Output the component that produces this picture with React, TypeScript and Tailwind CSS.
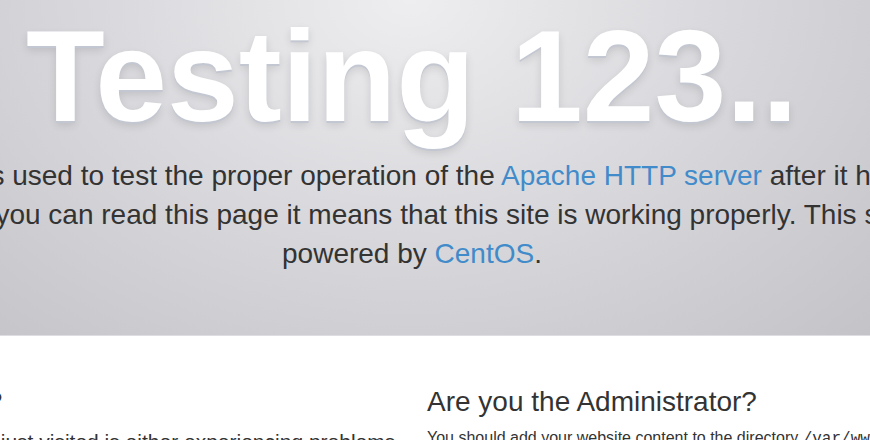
export default function App() {
  return (
    <div className="h-screen w-full overflow-hidden bg-white font-['Liberation_Sans',Arial,sans-serif] text-[#333]">
      <div className="border-b border-[#dedee1] bg-[radial-gradient(ellipse_at_47%_0%,#eeeef0_0%,#dadade_45%,#c3c3c8_100%)] pt-[6px] pb-[62px]">
        <div className="ml-[-173px] w-[1170px] px-[15px] text-center">
          <h1 className="whitespace-nowrap text-[129px] font-bold leading-[1.1] text-white [text-shadow:0_2px_0_#c3c7d1,0_4px_8px_rgba(0,0,0,0.12)]">
            Testing 123..
          </h1>
          <p className="mt-[8px] text-[28px] leading-[1.4] text-[#333]">
            This page is used to test the proper operation of the{" "}
            <a className="text-[#428bca]" href="#">
              Apache HTTP server
            </a>{" "}
            after it has been installed. If you can read this page it means that this site is working properly. This
            server is powered by{" "}
            <a className="text-[#428bca]" href="#">
              CentOS
            </a>
            .
          </p>
        </div>
      </div>
      <div className="mt-[31px] ml-[-173px] w-[1170px] px-[15px]">
        <div className="grid grid-cols-2 gap-[30px]">
          <div>
            <h2 className="mt-[20px] mb-[9px] text-[28px] leading-[1.1] text-[#333]">Just visiting?</h2>
            <p className="text-[21px] leading-[1.4] text-[#333]">
              The website you just visited is either experiencing problems or is undergoing routine maintenance.
            </p>
          </div>
          <div>
            <h2 className="mt-[20px] mb-[9px] text-[28px] leading-[1.1] text-[#333]">Are you the Administrator?</h2>
            <p className="text-[16px] leading-[1.43] text-[#333]">
              You should add your website content to the directory{" "}
              <tt className="font-['Liberation_Mono',monospace]">/var/www/html/</tt>.
            </p>
          </div>
        </div>
      </div>
    </div>
  );
}
